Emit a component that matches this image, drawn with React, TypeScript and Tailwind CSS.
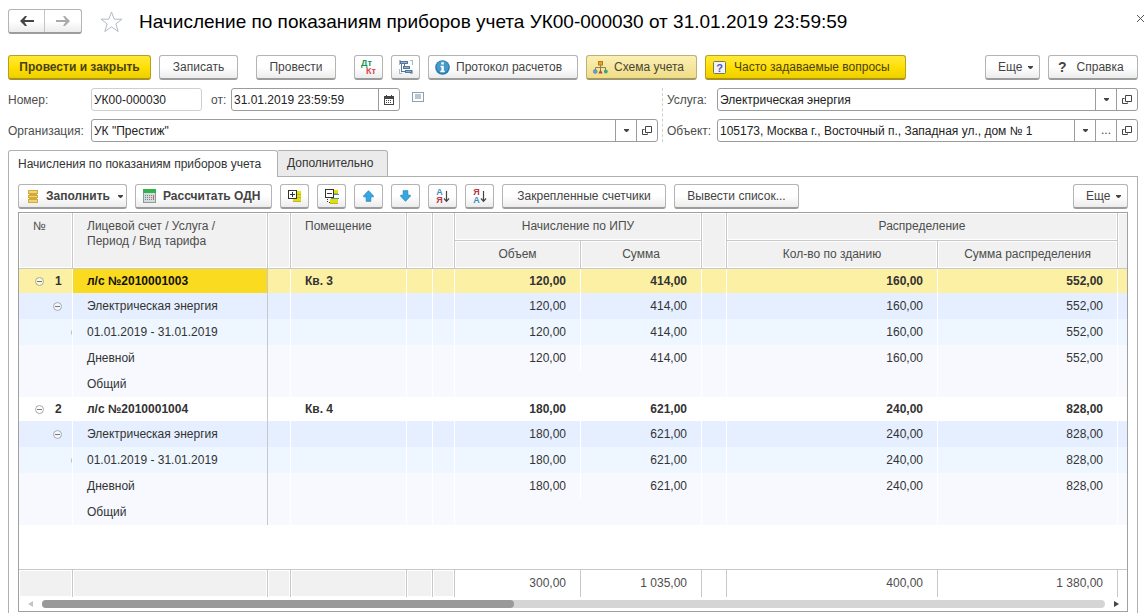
import React from "react";

type Kind = "account" | "service" | "period" | "leaf";

interface Row {
  kind: Kind;
  num?: string;
  title: string;
  room?: string;
  values?: [string, string, string, string];
  selected?: boolean;
}

const first: [string, string, string, string] = ["120,00", "414,00", "160,00", "552,00"];
const second: [string, string, string, string] = ["180,00", "621,00", "240,00", "828,00"];

const rows: Row[] = [
  { kind: "account", num: "1", title: "л/с №2010001003", room: "Кв. 3", values: first, selected: true },
  { kind: "service", title: "Электрическая энергия", values: first },
  { kind: "period", title: "01.01.2019 - 31.01.2019", values: first },
  { kind: "leaf", title: "Дневной", values: first },
  { kind: "leaf", title: "Общий" },
  { kind: "account", num: "2", title: "л/с №2010001004", room: "Кв. 4", values: second },
  { kind: "service", title: "Электрическая энергия", values: second },
  { kind: "period", title: "01.01.2019 - 31.01.2019", values: second },
  { kind: "leaf", title: "Дневной", values: second },
  { kind: "leaf", title: "Общий" },
];

const rowStyle: Record<Kind, string> = {
  account: "h-6 bg-white font-bold",
  service: "h-[26px] bg-[#e5efff]",
  period: "h-[26px] bg-[#eef7ff]",
  leaf: "h-[26px] bg-[#f7f9ff]",
};

const togglePad: Record<Kind, string> = {
  account: "pl-4",
  service: "pl-[34px]",
  period: "pl-[52px]",
  leaf: "",
};

const btnBase = "flex h-[25px] shrink-0 items-center whitespace-nowrap rounded-[3px] border border-b-2";
const plain = "border-[#b4b4b4] border-b-[#9c9c9c] bg-linear-to-b from-white from-50% to-[#ececec] text-[#444]";
const yellow = "border-[#b8a01c] border-b-[#a8921c] bg-linear-to-b from-[#ffe934] via-[#ffe000] to-[#edcf00] text-[#4a4217]";
const pale = "border-[#bfb173] border-b-[#a0976a] bg-linear-to-b from-[#fbf0b5] to-[#f0dd86] text-[#4a4634]";

function Button({
  className = "",
  tone = plain,
  label,
  start = false,
  children,
}: {
  className?: string;
  tone?: string;
  label?: string;
  start?: boolean;
  children: React.ReactNode;
}) {
  return (
    <button
      type="button"
      aria-label={label}
      className={`${btnBase} ${start ? "justify-start" : "justify-center"} ${tone} ${className}`}
    >
      {children}
    </button>
  );
}

function Caret() {
  return (
    <svg width="5" height="3" viewBox="0 0 5 3" className="shrink-0" fill="#444" aria-hidden="true">
      <path d="M0 0h5v1L3 3H2L0 1z" />
    </svg>
  );
}

function OpenIcon() {
  return (
    <svg width="10" height="10" viewBox="0 0 10 10" fill="none" stroke="#444" aria-hidden="true">
      <path d="M3.5 0.5h6v6h-6z" />
      <path d="M2.5 3.5h-2v5h5v-1" />
    </svg>
  );
}

function CalendarIcon() {
  return (
    <svg width="10" height="10" viewBox="0 0 10 10" shapeRendering="crispEdges" aria-hidden="true">
      <path d="M0 1h10v9H0z" fill="#444" />
      <path d="M2 0h1v2H2zM7 0h1v2H7z" fill="#444" />
      <path d="M1 4h8v5H1z" fill="#fff" />
      <path d="M2 5h1v1H2zM4 5h1v1H4zM6 5h1v1H6zM2 7h1v1H2zM4 7h1v1H4zM6 7h1v1H6z" fill="#444" />
    </svg>
  );
}

function PostingsIcon() {
  return (
    <svg width="18" height="16" viewBox="0 0 18 16" aria-hidden="true" fontFamily="Liberation Sans, sans-serif" fontWeight="700">
      <text x="1" y="7" fontSize="9" fill="#179653">Дт</text>
      <text x="6" y="15" fontSize="9" fill="#d9474a">Кт</text>
    </svg>
  );
}

function StructureIcon() {
  return (
    <svg width="14" height="14" viewBox="0 0 14 14" shapeRendering="crispEdges" fill="none" stroke="#54779c" aria-hidden="true">
      <path d="M0.5 5V0.5H2M11 0.5h2.500V5M0.5 9v4.500H3M11 13.500h2.500V10" stroke="#a3bacf" />
      <path d="M1.500 1.500h7v2h-7zM4.500 6.500h6v2h-6zM6.500 10.500h6v2h-6z" fill="#8fb0d0" />
      <path d="M2.500 4v7.500H6M5.500 4v2" />
    </svg>
  );
}

function InfoIcon() {
  return (
    <svg width="15" height="15" viewBox="0 0 15 15" aria-hidden="true">
      <circle cx="7.500" cy="7.500" r="7.300" fill="#2b7db0" />
      <circle cx="7.500" cy="6.800" r="6" fill="#4599cb" />
      <path d="M6.300 2.300h2.500v2.200H6.300zM5.500 5.800h3.300v5h1v1.400H5.300v-1.400h1.100V7.200h-.9z" fill="#fff" />
    </svg>
  );
}

function SchemeIcon() {
  return (
    <svg width="15" height="13" viewBox="0 0 15 13" aria-hidden="true">
      <path d="M7.500 4v6M2.500 9V6.500h10V9" fill="none" stroke="#8a8055" />
      <rect x="5.500" y="0.500" width="4" height="3.500" fill="#f0a020" stroke="#b77a18" />
      <circle cx="2.200" cy="10.500" r="1.900" fill="#6b9cd0" stroke="#4c7bac" strokeWidth=".6" />
      <path d="M7.500 8.500l2.200 4H5.300z" fill="#b84a40" />
      <circle cx="12.800" cy="10.500" r="1.900" fill="#35a77b" />
    </svg>
  );
}

function QuestionIcon() {
  return (
    <svg width="13" height="13" viewBox="0 0 13 13" aria-hidden="true">
      <rect x=".5" y=".5" width="12" height="12" rx="1" fill="#f4f4ee" stroke="#77746a" />
      <text x="6.500" y="10.500" textAnchor="middle" fontSize="11" fontWeight="700" fontFamily="Liberation Sans, sans-serif" fill="#5552cf">?</text>
    </svg>
  );
}

function StackIcon() {
  return (
    <svg width="10" height="13" viewBox="0 0 10 13" shapeRendering="crispEdges" aria-hidden="true">
      <path d="M0 0h10v4H0zM1 4h8v1H1zM0 5h10v3H0zM1 8h8v1H1zM0 9h10v4H0z" fill="#d2aa3b" />
      <path d="M1 1h8v2H1zM1 6h8v1H1zM1 10h8v2H1z" fill="#f0d476" />
    </svg>
  );
}

function CalculatorIcon() {
  return (
    <svg width="13" height="14" viewBox="0 0 13 14" shapeRendering="crispEdges" aria-hidden="true">
      <path d="M0 0h13v14H0z" fill="#8e9a9a" />
      <path d="M1 4h11v9H1z" fill="#d3dbdb" />
      <path d="M0 0h13v4H0z" fill="#32b34b" />
      <path d="M2 6h1v1H2zM4 6h1v1H4zM6 6h1v1H6zM8 6h1v1H8zM2 8h1v1H2zM4 8h1v1H4zM6 8h1v1H6zM8 8h1v1H8zM2 10h1v1H2zM4 10h1v1H4zM6 10h1v1H6zM8 10h1v1H8z" fill="#76878f" />
      <path d="M10 6h1v5h-1z" fill="#c66" />
    </svg>
  );
}

function ExpandIcon() {
  return (
    <svg width="13" height="12" viewBox="0 0 13 12" shapeRendering="crispEdges" aria-hidden="true">
      <path d="M8 1h5v3H8zM5 5h8v2H5zM5 8h8v3H5z" fill="#e3df00" />
      <path d="M8 4h5v1H8zM5 7h8v1H5zM5 11h8v1H5z" fill="#b9b43a" />
      <path d="M0 0h9v9H0z" fill="#333" />
      <path d="M1 1h7v7H1z" fill="#fff" />
      <path d="M2 4h5v1H2zM4 2h1v5H4z" fill="#333" />
    </svg>
  );
}

function CollapseIcon() {
  return (
    <svg width="14" height="15" viewBox="0 0 14 15" shapeRendering="crispEdges" aria-hidden="true">
      <path d="M9 1h4v3H9zM5 10h8v4H5z" fill="#e3df00" />
      <path d="M9 4h4v1H9zM5 14h8v1H5z" fill="#b9b43a" />
      <path d="M9 5h5v1H9zM6 9h8v1H6z" fill="#3e96c4" />
      <path d="M0 0h9v9H0z" fill="#333" />
      <path d="M1 1h7v7H1z" fill="#fff" />
      <path d="M2 4h5v1H2z" fill="#333" />
      <path d="M2 10h1v1H2zM2 12h1v1H2zM4 13h1v1H4z" fill="#333" />
    </svg>
  );
}

function ArrowIcon({ down = false }: { down?: boolean }) {
  return (
    <svg width="11" height="12" viewBox="0 0 11 12" className={down ? "rotate-180" : ""} aria-hidden="true">
      <path d="M5.500 0.700l4.800 5.100v1H7.800v4.500H3.200V6.800H.7v-1z" fill="#35a7e3" stroke="#2785b9" strokeWidth=".8" />
    </svg>
  );
}

function SortIcon({ top, bottom, desc = false }: { top: string; bottom: string; desc?: boolean }) {
  return (
    <svg width="14" height="16" viewBox="0 0 14 16" aria-hidden="true">
      <g fontFamily="Liberation Sans, sans-serif" fontSize="9" fontWeight="700" textAnchor="middle">
        <text x="3.500" y="7" fill={desc ? "#bd353c" : "#3c8ec2"}>{top}</text>
        <text x="3.500" y="15" fill={desc ? "#3c8ec2" : "#bd353c"}>{bottom}</text>
      </g>
      <path d="M10.500 3v10M8 10.500l2.500 2.800 2.500-2.800" fill="none" stroke="#444" strokeWidth="1.200" />
    </svg>
  );
}

function ToggleIcon() {
  return (
    <svg width="9" height="9" viewBox="0 0 9 9" fill="none" aria-hidden="true">
      <circle cx="4.500" cy="4.500" r="4" fill="#fff" fillOpacity=".5" stroke="#a8a8a8" />
      <path d="M2 4.500h5" stroke="#777" />
    </svg>
  );
}

function NavArrow({ forward = false }: { forward?: boolean }) {
  return (
    <svg width="14" height="10" viewBox="0 0 14 10" className={forward ? "rotate-180" : ""} fill={forward ? "#aaa" : "#444"} aria-hidden="true">
      <path d="M0 5L5 0h2L4.500 4H14v2H4.500L7 10H5z" />
    </svg>
  );
}

type Action = "menu" | "more" | "open" | "calendar";

const actionName: Record<Action, string> = {
  menu: "Выбрать из списка",
  more: "Выбрать",
  open: "Открыть",
  calendar: "Календарь",
};

function Field({
  id,
  value,
  actions = [],
  className = "",
  muted = false,
}: {
  id: string;
  value: string;
  actions?: Action[];
  className?: string;
  muted?: boolean;
}) {
  return (
    <div
      className={`flex h-[23px] overflow-hidden rounded-[3px] border bg-white ${muted ? "border-[#cfcfcf]" : "border-[#9c9c9c]"} ${className}`}
    >
      <input id={id} defaultValue={value} className="min-w-0 flex-1 bg-transparent px-[2px] pt-[2px] text-[#222] outline-none" />
      {actions.map((a) => (
        <button
          key={a}
          type="button"
          aria-label={actionName[a]}
          className="flex w-[21px] shrink-0 items-center justify-center border-l border-[#9c9c9c] text-[#444]"
        >
          {a === "menu" && <Caret />}
          {a === "more" && "..."}
          {a === "open" && <OpenIcon />}
          {a === "calendar" && <CalendarIcon />}
        </button>
      ))}
    </div>
  );
}

const th =
  "border-r border-b border-[#c8c8c8] bg-[#f1f1f1] px-[14px] pt-[6px] align-top font-normal text-[#4d4d4d] shadow-[inset_0_0_0_1px_#fff]";
const thSub =
  "h-7 border-r border-b border-[#c8c8c8] bg-[#f1f1f1] font-normal text-[#4d4d4d] shadow-[inset_0_0_0_1px_#fff]";
const td = "border-r border-white px-[14px] py-0";
const tdNum = "border-r border-white px-[14px] py-0 text-right";
const tfGray = "border-t border-r border-[#c8c8c8] bg-[#f1f1f1] p-0 shadow-[inset_0_0_0_1px_#fff]";
const tfNum = "border-t border-r border-[#c8c8c8] px-[14px] py-0 text-right text-[#4d4d4d]";

function DataTable() {
  return (
    <table className="w-full table-fixed border-separate border-spacing-0">
      <colgroup>
        <col className="w-[54px]" />
        <col className="w-[195px]" />
        <col className="w-[23px]" />
        <col className="w-[116px]" />
        <col className="w-[26px]" />
        <col className="w-[22px]" />
        <col className="w-[126px]" />
        <col className="w-[121px]" />
        <col className="w-[25px]" />
        <col className="w-[211px]" />
        <col />
        <col className="w-[9px]" />
      </colgroup>
      <thead>
        <tr className="h-7">
          <th rowSpan={2} className={`${th} text-left`}>№</th>
          <th rowSpan={2} className={`${th} text-left`}>
            Лицевой счет / Услуга /<br />Период / Вид тарифа
          </th>
          <th rowSpan={2} className={th} />
          <th rowSpan={2} className={`${th} text-left`}>Помещение</th>
          <th rowSpan={2} className={th} />
          <th rowSpan={2} className={th} />
          <th colSpan={2} className={thSub}>Начисление по ИПУ</th>
          <th rowSpan={2} className={th} />
          <th colSpan={2} className={thSub}>Распределение</th>
          <th rowSpan={2} className="border-b border-[#c8c8c8] bg-[#f1f1f1] p-0 shadow-[inset_1px_1px_0_#fff]" />
        </tr>
        <tr className="h-7">
          <th className={thSub}>Объем</th>
          <th className={thSub}>Сумма</th>
          <th className={thSub}>Кол-во по зданию</th>
          <th className={thSub}>Сумма распределения</th>
        </tr>
      </thead>
      <tbody className="text-[#333]">
        {rows.map((r, i) => (
          <tr key={i} className={r.selected ? "h-6 bg-[#fcf0a5] font-bold" : rowStyle[r.kind]}>
            <td className="border-r border-white p-0">
              {r.kind !== "leaf" && (
                <div className={`flex items-center gap-[11px] overflow-hidden ${togglePad[r.kind]}`}>
                  <button type="button" aria-label="Свернуть" className="shrink-0">
                    <ToggleIcon />
                  </button>
                  {r.num && <span>{r.num}</span>}
                </div>
              )}
            </td>
            <td
              className={`border-r border-r-[#c8c8c8] px-[14px] py-0 whitespace-nowrap ${r.selected ? "bg-[#fbdb1f] text-[#111]" : ""}`}
            >
              {r.title}
            </td>
            <td className={td} />
            <td className={td}>{r.room}</td>
            <td className={td} />
            <td className={td} />
            <td className={r.values ? tdNum : "px-[14px] py-0"}>{r.values?.[0]}</td>
            <td className={tdNum}>{r.values?.[1]}</td>
            <td className={td} />
            <td className={tdNum}>{r.values?.[2]}</td>
            <td className={tdNum}>{r.values?.[3]}</td>
            <td className="p-0" />
          </tr>
        ))}
        <tr className="h-11">
          <td colSpan={12} className="p-0" />
        </tr>
      </tbody>
      <tfoot>
        <tr className="h-7">
          <td className={tfGray} />
          <td className={tfGray} />
          <td className={tfGray} />
          <td className={tfGray} />
          <td className={tfGray} />
          <td className={tfGray} />
          <td className={tfNum}>300,00</td>
          <td className={tfNum}>1 035,00</td>
          <td className={tfNum} />
          <td className={tfNum}>400,00</td>
          <td className={tfNum}>1 380,00</td>
          <td className="border-t border-[#c8c8c8] p-0" />
        </tr>
      </tfoot>
    </table>
  );
}

export default function App() {
  return (
    <main className="flex flex-col bg-white pr-[10px] pl-2 font-['Liberation_Sans',Arial,sans-serif] text-[12px] leading-[15px] text-[#4d4d4d]">
      <header className="flex items-start pt-[9px]">
        <div className="flex h-[25px] rounded-[3px] border border-b-2 border-[#b4b4b4] border-b-[#9c9c9c] bg-linear-to-b from-white from-50% to-[#ececec]">
          <button type="button" aria-label="Назад" className="flex w-9 items-center justify-center border-r border-[#c4c4c4]">
            <NavArrow />
          </button>
          <button type="button" aria-label="Вперед" className="flex w-9 items-center justify-center">
            <NavArrow forward />
          </button>
        </div>
        <button type="button" aria-label="Добавить в избранное" className="mt-[2px] ml-[18px]">
          <svg width="23" height="22" viewBox="0 0 23 22" fill="none" stroke="#b3bac2" aria-hidden="true">
            <path d="M11.500 1l2.700 7.200h7.800l-6.200 4.700 2.400 7.600-6.700-4.600-6.700 4.600 2.400-7.600L1 8.200h7.800z" />
          </svg>
        </button>
        <h1 className="ml-4 flex-1 text-[19px] leading-[26px] text-black">
          Начисление по показаниям приборов учета УК00-000030 от 31.01.2019 23:59:59
        </h1>
        <button type="button" aria-label="Закрыть" className="-mr-[7px] mt-[5px]">
          <svg width="9" height="9" viewBox="0 0 9 9" stroke="#555" aria-hidden="true">
            <path d="M1 1l7 7M8 1L1 8" />
          </svg>
        </button>
      </header>

      <div className="mt-[20px] flex gap-2">
        <Button tone={yellow} className="w-[143px] font-bold">Провести и закрыть</Button>
        <Button className="w-[79px]">Записать</Button>
        <Button className="ml-[10px] w-[80px]">Провести</Button>
        <Button className="ml-[10px] w-[29px]" label="Проводки"><PostingsIcon /></Button>
        <Button className="w-[29px]" label="Структура подчиненности"><StructureIcon /></Button>
        <Button start className="w-[150px] gap-[6px] pl-[6px]"><InfoIcon />Протокол расчетов</Button>
        <Button start tone={pale} className="w-[111px] gap-[6px] pl-[6px]"><SchemeIcon />Схема учета</Button>
        <Button start tone={yellow} className="w-[201px] gap-2 pl-[7px]"><QuestionIcon />Часто задаваемые вопросы</Button>
        <Button start className="ml-auto w-[55px] gap-[6px] pl-3">Еще<Caret /></Button>
        <Button start className="w-[90px] gap-[10px] pl-[9px]">
          <span className="text-[14px] font-bold">?</span>Справка
        </Button>
      </div>

      <div className="mt-2 flex">
        <div className="flex w-[650px] shrink-0 flex-col gap-2">
          <div className="flex items-center">
            <label htmlFor="number" className="w-[83px] pt-[2px]">Номер:</label>
            <Field id="number" value="УК00-000030" className="w-[111px]" muted />
            <label htmlFor="date" className="ml-[9px] w-[20px] pt-[2px]">от:</label>
            <Field id="date" value="31.01.2019 23:59:59" className="w-[169px]" actions={["calendar"]} />
            <svg width="12" height="10" viewBox="0 0 12 10" className="mb-[6px] ml-3" shapeRendering="crispEdges" aria-hidden="true">
              <path d="M0 0h12v10H0z" fill="#8e9fb0" />
              <path d="M1 1h10v8H1z" fill="#fff" />
              <path d="M3 2h6v5H3z" fill="#b9c5cf" />
            </svg>
          </div>
          <div className="flex items-center">
            <label htmlFor="org" className="w-[83px] pt-[2px]">Организация:</label>
            <Field id="org" value={'УК "Престиж"'} className="flex-1" actions={["menu", "open"]} />
          </div>
        </div>
        <div className="ml-1 flex flex-1 flex-col gap-2 border-l border-dashed border-[#cfcfcf] pl-1">
          <div className="flex items-center">
            <label htmlFor="service" className="w-[50px] pt-[2px]">Услуга:</label>
            <Field id="service" value="Электрическая энергия" className="flex-1" actions={["menu", "open"]} />
          </div>
          <div className="flex items-center">
            <label htmlFor="object" className="w-[50px] pt-[2px]">Объект:</label>
            <Field
              id="object"
              value="105173, Москва г., Восточный п., Западная ул., дом № 1"
              className="flex-1"
              actions={["menu", "more", "open"]}
            />
          </div>
        </div>
      </div>

      <div role="tablist" className="mt-2 flex text-[#333]">
        <button
          type="button"
          role="tab"
          aria-selected="true"
          className="h-[27px] w-[270px] rounded-t-[3px] border-x border-t border-[#b0b0b0] bg-white pl-[9px] text-left whitespace-nowrap"
        >
          Начисления по показаниям приборов учета
        </button>
        <button
          type="button"
          role="tab"
          aria-selected="false"
          className="h-[27px] w-[110px] rounded-tr-[3px] border-t border-r border-b border-[#b0b0b0] bg-[#ebebeb] pl-[9px] text-left"
        >
          Дополнительно
        </button>
        <div className="flex-1 border-b border-[#b0b0b0]" />
      </div>

      <section role="tabpanel" className="border-x border-[#b0b0b0] px-[9px] pt-[7px] pb-px">
        <div className="flex gap-2">
          <Button start className="w-[109px] gap-2 pl-[9px] font-bold">
            <StackIcon />Заполнить<Caret />
          </Button>
          <Button start className="w-[137px] gap-[7px] pl-[7px] font-bold"><CalculatorIcon />Рассчитать ОДН</Button>
          <Button className="w-[29px]" label="Развернуть все"><ExpandIcon /></Button>
          <Button className="w-[29px]" label="Свернуть все"><CollapseIcon /></Button>
          <Button className="w-[29px]" label="Переместить вверх"><ArrowIcon /></Button>
          <Button className="w-[29px]" label="Переместить вниз"><ArrowIcon down /></Button>
          <Button className="w-[29px]" label="Сортировать по возрастанию"><SortIcon top="А" bottom="Я" /></Button>
          <Button className="w-[29px]" label="Сортировать по убыванию"><SortIcon top="Я" bottom="А" desc /></Button>
          <Button className="w-[164px]">Закрепленные счетчики</Button>
          <Button className="w-[125px]">Вывести список...</Button>
          <Button start className="ml-auto w-[55px] gap-[6px] pl-3">Еще<Caret /></Button>
        </div>
        <div className="mt-[3px] border border-[#a0a0a0]">
          <DataTable />
          <div className="flex h-[14px] items-center">
            <svg width="5" height="6" viewBox="0 0 5 6" className="ml-[9px] shrink-0" fill="#c4c4c4" aria-hidden="true">
              <path d="M5 0v6L0 3z" />
            </svg>
            <div className="mr-[9px] ml-[9px] h-2 flex-1 rounded-full bg-[#d5d5d5]">
              <div className="h-2 w-4/9 rounded-full bg-[#999]" />
            </div>
            <svg width="5" height="6" viewBox="0 0 5 6" className="mr-[8px] shrink-0" fill="#444" aria-hidden="true">
              <path d="M0 0v6l5-3z" />
            </svg>
          </div>
        </div>
      </section>
    </main>
  );
}
